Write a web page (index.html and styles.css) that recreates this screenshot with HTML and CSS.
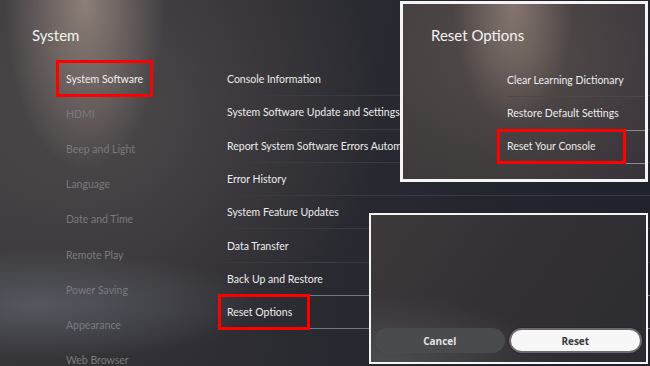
FILE: index.html
```html
<!DOCTYPE html>
<html lang="en">
<head>
<meta charset="utf-8">
<title>System – Reset Options</title>
<link rel="stylesheet" href="styles.css">
</head>
<body>
<div class="screen">
  <div class="main">
    <h1 class="title">System</h1>
    <div class="cols">
      <ul class="side">
        <li class="side-item"><span class="mark">System Software</span></li>
        <li class="side-item dim">HDMI</li>
        <li class="side-item dim">Beep and Light</li>
        <li class="side-item dim">Language</li>
        <li class="side-item dim">Date and Time</li>
        <li class="side-item dim">Remote Play</li>
        <li class="side-item dim">Power Saving</li>
        <li class="side-item dim">Appearance</li>
        <li class="side-item dim">Web Browser</li>
      </ul>
      <ul class="list">
        <li class="row">Console Information</li>
        <li class="row">System Software Update and Settings</li>
        <li class="row">Report System Software Errors Automatically</li>
        <li class="row">Error History</li>
        <li class="row">System Feature Updates</li>
        <li class="row">Data Transfer</li>
        <li class="row pre-focus">Back Up and Restore</li>
        <li class="row focus"><span class="mark">Reset Options</span></li>
      </ul>
    </div>
  </div>

  <section class="panel options">
    <h2 class="panel-title">Reset Options</h2>
    <ul class="opt-list">
      <li class="opt">Clear Learning Dictionary</li>
      <li class="opt pre-focus">Restore Default Settings</li>
      <li class="opt focus"><span class="mark">Reset Your Console</span></li>
    </ul>
  </section>

  <section class="panel dialog">
    <div class="buttons">
      <button class="btn cancel">Cancel</button>
      <button class="btn reset">Reset</button>
    </div>
  </section>
</div>
</body>
</html>
```

FILE: styles.css
```css
* { box-sizing: border-box; }
html, body { margin: 0; padding: 0; }
body {
  width: 650px;
  height: 366px;
  overflow: hidden;
  background: #26272e;
  font-family: "Lato", "Open Sans", sans-serif;
}
ul { list-style: none; margin: 0; padding: 0; }

.screen {
  position: relative;
  width: 650px;
  height: 366px;
  overflow: hidden;
  background:
    radial-gradient(ellipse 80px 170px at 85px 0px, rgba(190,168,155,0.6), rgba(190,168,155,0) 100%),
    radial-gradient(ellipse 220px 55px at 40px 305px, rgba(110,118,130,0.5), rgba(110,118,130,0) 100%),
    radial-gradient(ellipse 280px 260px at 100px 110px, rgba(100,92,90,0.55), rgba(100,92,90,0) 100%),
    linear-gradient(100deg, #38373b 0%, #2f2e34 35%, #24262e 70%, #1f222b 100%);
}

.main {
  padding: 26px 0 0 32px;
}
.title {
  margin: 0;
  font-weight: 400;
  font-size: 15px;
  line-height: 18px;
  color: #f2f2f2;
}
.cols {
  display: flex;
  margin-top: 17px;
}
.side {
  width: 186px;
  padding-left: 24px;
}
.side-item {
  height: 35.2px;
  display: flex;
  align-items: center;
  font-size: 10.5px;
  color: #f0f0f0;
  padding-left: 10px;
}
.side-item.dim { color: #7a797e; }
.side-item .mark {
  margin-left: -10px;
  width: 97px;
  height: 37px;
  display: flex;
  align-items: center;
  padding: 0 0 0 7px;
  border: 3px solid #ff0000;
}

.list {
  flex: 1;
  padding-top: 2px;
}
.row {
  height: 33.3px;
  margin-left: 9px;
  display: flex;
  align-items: center;
  font-size: 10.5px;
  color: #ececec;
  white-space: nowrap;
  border-bottom: 1px solid #393b44;
}
.row.pre-focus { border-bottom-color: #77758a; }
.row.focus { border-bottom-color: #77758a; }
.row .mark {
  margin-left: -9px;
  width: 92px;
  height: 36px;
  margin-top: -1px;
  display: flex;
  align-items: center;
  padding: 0 0 0 6px;
  border: 3px solid #ff0000;
}

/* overlay panels */
.panel {
  position: absolute;
  border: 3px solid #f4f4f4;
}
.options {
  left: 400px;
  top: 1px;
  width: 248px;
  height: 181px;
  padding: 22px 0 0 28px;
  background:
    radial-gradient(ellipse 60px 120px at 110px 0px, rgba(200,175,160,0.45), rgba(200,175,160,0) 100%),
    radial-gradient(ellipse 200px 160px at 120px 50px, rgba(110,98,94,0.5), rgba(110,98,94,0) 100%),
    linear-gradient(100deg, #3e3a3b 0%, #3a3637 50%, #36313a 100%);
}
.panel-title {
  margin: 0;
  font-weight: 400;
  font-size: 15px;
  line-height: 18px;
  color: #f2f2f2;
}
.opt-list {
  margin: 20px 0 0 76px;
}
.opt {
  height: 33.3px;
  display: flex;
  align-items: center;
  font-size: 10.5px;
  color: #ececec;
  white-space: nowrap;
  border-bottom: 1px solid #4d4749;
}
.opt.pre-focus { border-bottom-color: #9a8480; }
.opt.focus { border-bottom: 1px solid #8a889c; }
.opt .mark {
  margin-left: -10px;
  width: 129px;
  height: 35px;
  margin-top: -1px;
  display: flex;
  align-items: center;
  padding: 0 0 0 7px;
  border: 3px solid #ff0000;
}

.dialog {
  left: 369px;
  top: 213px;
  width: 279px;
  height: 151px;
  border-width: 2px;
  display: flex;
  align-items: flex-end;
  padding: 0 4px 9px 4px;
  background:
    radial-gradient(ellipse 160px 70px at 20px 150px, rgba(95,102,108,0.5), rgba(95,102,108,0) 100%),
    linear-gradient(125deg, #3d393b 0%, #343134 45%, #2b2b30 100%);
}
.buttons {
  display: flex;
  gap: 4px;
  width: 100%;
}
.btn {
  flex: 1;
  height: 25px;
  border-radius: 13px;
  font-family: "Open Sans", "Lato", sans-serif;
  font-size: 10px;
  font-weight: 700;
  padding: 0;
}
.cancel {
  background: #4a4b4f;
  color: #e4e4e4;
  border: 0;
}
.reset {
  background: #f7f7f7;
  color: #3a3a3e;
  border: 2px solid #6c6a70;
  box-shadow: 0 0 0 1px #2a2a2e;
}
```
